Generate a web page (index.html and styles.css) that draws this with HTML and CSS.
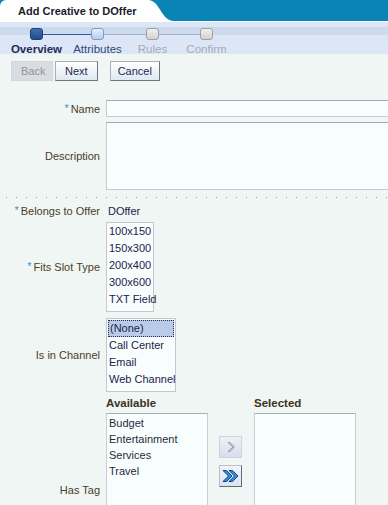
FILE: index.html
```html
<!DOCTYPE html>
<html lang="en">
<head>
    <meta charset="UTF-8">
    <title>Add Creative to DOffer</title>
    <link rel="stylesheet" href="styles.css">
</head>
<body>
    <!-- Dialog title tab -->
    <div class="header">
        <div class="tab">Add Creative to DOffer</div>
        <svg class="tab-curve" width="26" height="21" viewBox="0 0 26 21">
            <path d="M0 0 C12 0 13 21 26 21 L0 21 Z" fill="#fff"/>
        </svg>
    </div>

    <!-- Train -->
    <div class="train">
        <div class="nodes">
            <span class="node done"></span>
            <span class="link active"></span>
            <span class="node current"></span>
            <span class="link"></span>
            <span class="node"></span>
            <span class="link"></span>
            <span class="node"></span>
        </div>
        <div class="steps">
            <span class="step s1 done">Overview</span>
            <span class="step s2 current">Attributes</span>
            <span class="step s3">Rules</span>
            <span class="step s4">Confirm</span>
        </div>
    </div>

    <div class="toolbar">
        <button class="btn" disabled>Back</button>
        <button class="btn">Next</button>
        <button class="btn cancel">Cancel</button>
    </div>

    <div class="form">
        <div class="row name-row">
            <label class="label"><span class="req">*</span>Name</label>
            <input class="field" type="text">
        </div>
        <div class="row desc-row">
            <label class="label">Description</label>
            <textarea class="field area"></textarea>
        </div>

        <div class="separator"></div>

        <div class="row offer-row">
            <label class="label"><span class="req">*</span>Belongs to Offer</label>
            <span class="value">DOffer</span>
        </div>
        <div class="row slot-row">
            <label class="label"><span class="req">*</span>Fits Slot Type</label>
            <ul class="listbox slots">
                <li>100x150</li>
                <li>150x300</li>
                <li>200x400</li>
                <li>300x600</li>
                <li>TXT Field</li>
            </ul>
        </div>
        <div class="row channel-row">
            <label class="label">Is in Channel</label>
            <ul class="listbox channels">
                <li class="selected">(None)</li>
                <li>Call Center</li>
                <li>Email</li>
                <li>Web Channel</li>
            </ul>
        </div>
        <div class="row tag-row">
            <label class="label">Has Tag</label>
            <div class="shuttle">
                <div class="shuttle-col">
                    <div class="shuttle-title">Available</div>
                    <ul class="listbox shuttle-list">
                        <li>Budget</li>
                        <li>Entertainment</li>
                        <li>Services</li>
                        <li>Travel</li>
                    </ul>
                </div>
                <div class="shuttle-buttons">
                    <button class="move">
                        <svg width="12" height="12" viewBox="0 0 12 12">
                            <path d="M3 1.5 L8 6 L3 10.5 L4.8 10.5 L9.6 6 L4.8 1.5 Z" fill="#fff" stroke="#8d949c" stroke-width="1"/>
                        </svg>
                    </button>
                    <button class="move all">
                        <svg width="18" height="14" viewBox="0 0 18 14">
                            <path d="M1 1.5 L6.5 7 L1 12.5 L4.5 12.5 L10 7 L4.5 1.5 Z" fill="#2f8fe0" stroke="#14408a" stroke-width="1"/>
                            <path d="M7 1.5 L12.5 7 L7 12.5 L10.5 12.5 L16 7 L10.5 1.5 Z" fill="#2f8fe0" stroke="#14408a" stroke-width="1"/>
                        </svg>
                    </button>
                </div>
                <div class="shuttle-col">
                    <div class="shuttle-title">Selected</div>
                    <ul class="listbox shuttle-list"></ul>
                </div>
            </div>
        </div>
    </div>
</body>
</html>
```
FILE: styles.css
```css
/* General Styles */
html, body {
    overflow: hidden;
}

body {
    margin: 0;
    font-family: 'Liberation Sans', Arial, sans-serif;
    font-size: 11px;
    background: #eff6f4;
    color: #4d3d26;
}

/* Header tab */
.header {
    display: flex;
    height: 21px;
    background: #0a84b4;
    border-bottom: 1px solid #fff;
}

.tab {
    width: 130px;
    padding-left: 18px;
    background: #fff;
    border-top-left-radius: 6px;
    font-weight: bold;
    color: #1b1b2b;
    line-height: 23px;
    white-space: nowrap;
}

.tab-curve {
    display: block;
}

/* Train */
.train {
    height: 32px;
    background: linear-gradient(#dde6f6 0, #dde6f6 5px, #ccdaec 5px, #ccdaec 13px, #dde6f6 13px);
}

.nodes {
    display: flex;
    align-items: center;
    height: 12px;
    padding: 6px 0 0 30px;
}

.node {
    width: 11px;
    height: 10px;
    border: 1px solid #9aa0a8;
    border-radius: 3px;
    background: linear-gradient(#f2f0ec, #d5d2cc);
}

.node.done {
    border-color: #1d3f73;
    background: linear-gradient(#3f6fae, #204d8c);
}

.node.current {
    border-color: #7b9bc9;
    background: linear-gradient(#e6eefa, #b8cdec);
}

.link {
    height: 1px;
    width: 42px;
    background: #9db2cf;
}

.link.active {
    width: 48px;
    background: #2f5ea8;
}

.link + .node + .link + .node + .link {
    width: 41px;
}

.steps {
    display: flex;
    padding-top: 3px;
    line-height: 12px;
    font-size: 11.5px;
}

.step {
    text-align: center;
    color: #a3abb6;
}

.step.s1 { width: 73px; }
.step.s2 { width: 49px; }
.step.s3 { width: 61px; }
.step.s4 { width: 47px; }

.step.done {
    font-weight: bold;
    color: #1e2c55;
}

.step.current {
    color: #2d4b7c;
}

/* Buttons */
.toolbar {
    display: flex;
    padding: 7px 0 0 11px;
}

.btn {
    height: 20px;
    padding: 0 9px;
    margin-right: 2px;
    font-family: inherit;
    font-size: 11px;
    color: #1d2a52;
    background: linear-gradient(#ffffff, #dfe7f1);
    border: 1px solid #a7b0b8;
    border-right-color: #6e7780;
    border-bottom-color: #6e7780;
}

.btn:disabled {
    width: 42px;
    color: #8e949b;
    background: #d9dde1;
    border-color: #d3d7db;
}

.btn.cancel {
    margin-left: 10px;
    padding: 0 7px;
}

/* Form */
.form {
    display: flex;
    flex-direction: column;
    padding-top: 19px;
}

.row {
    display: grid;
    grid-template-columns: 100px 1fr;
    column-gap: 6px;
    align-items: center;
}

.label {
    text-align: right;
    white-space: nowrap;
}

.req {
    color: #4a8fd3;
    margin-right: 2px;
    position: relative;
    top: -1px;
}

.field {
    box-sizing: border-box;
    width: 300px;
    height: 17px;
    margin: 0;
    padding: 1px 3px;
    background: #f8fefe;
    border: 1px solid #c6cdd2;
    border-top-color: #a4abb1;
    font-family: inherit;
    font-size: 11px;
}

.area {
    height: 68px;
    resize: none;
    display: block;
}

.desc-row {
    margin-top: 5px;
}

.separator {
    height: 1px;
    margin: 7px 0 0 6px;
    background: linear-gradient(to right, #9a9a9a 1px, transparent 1px);
    background-size: 10px 1px;
}

.offer-row {
    margin-top: 5px;
    line-height: 16px;
}

.value {
    padding-left: 2px;
    color: #23234a;
}

.listbox {
    list-style: none;
    margin: 0;
    padding: 0 0 3px;
    background: #f8fefe;
    border: 1px solid #c1c8ce;
    color: #23234a;
    justify-self: start;
}

.listbox li {
    height: 17px;
    line-height: 17px;
    padding: 0 2px;
    white-space: nowrap;
}

.slot-row {
    margin-top: 3px;
}

.slots {
    width: 46px;
}

.channel-row {
    margin-top: 6px;
}

.channels {
    width: 68px;
}

.channels li.selected {
    height: 15px;
    line-height: 15px;
    padding: 0 1px;
    margin: 1px 1px 0;
    background: #b9cbe6;
    border: 1px dotted #1b2b6b;
}

/* Shuttle */
.tag-row {
    margin-top: 4px;
}

.shuttle {
    display: flex;
}

.shuttle-title {
    font-weight: bold;
    color: #3a3222;
    font-size: 11.5px;
    line-height: 14px;
    margin-bottom: 3px;
}

.shuttle-list {
    width: 102px;
    height: 170px;
    box-sizing: border-box;
    border-color: #c8ced3;
    border-top-color: #a8aeb3;
    padding-top: 1px;
}

.shuttle-list li {
    height: 16px;
    line-height: 16px;
    color: #2a2a3a;
}

.shuttle-buttons {
    display: flex;
    flex-direction: column;
    gap: 7px;
    padding: 40px 12px 0 11px;
}

.move {
    width: 23px;
    height: 22px;
    padding: 0;
    display: flex;
    align-items: center;
    justify-content: center;
    background: linear-gradient(#eef2f8, #d6deeb);
    border: 1px solid #cdd3dc;
}

.move.all {
    background: linear-gradient(#f2f5fa, #dbe3ef);
    border-color: #b7c0cc;
    border-right-color: #5f6c7a;
    border-bottom-color: #5f6c7a;
}
```
